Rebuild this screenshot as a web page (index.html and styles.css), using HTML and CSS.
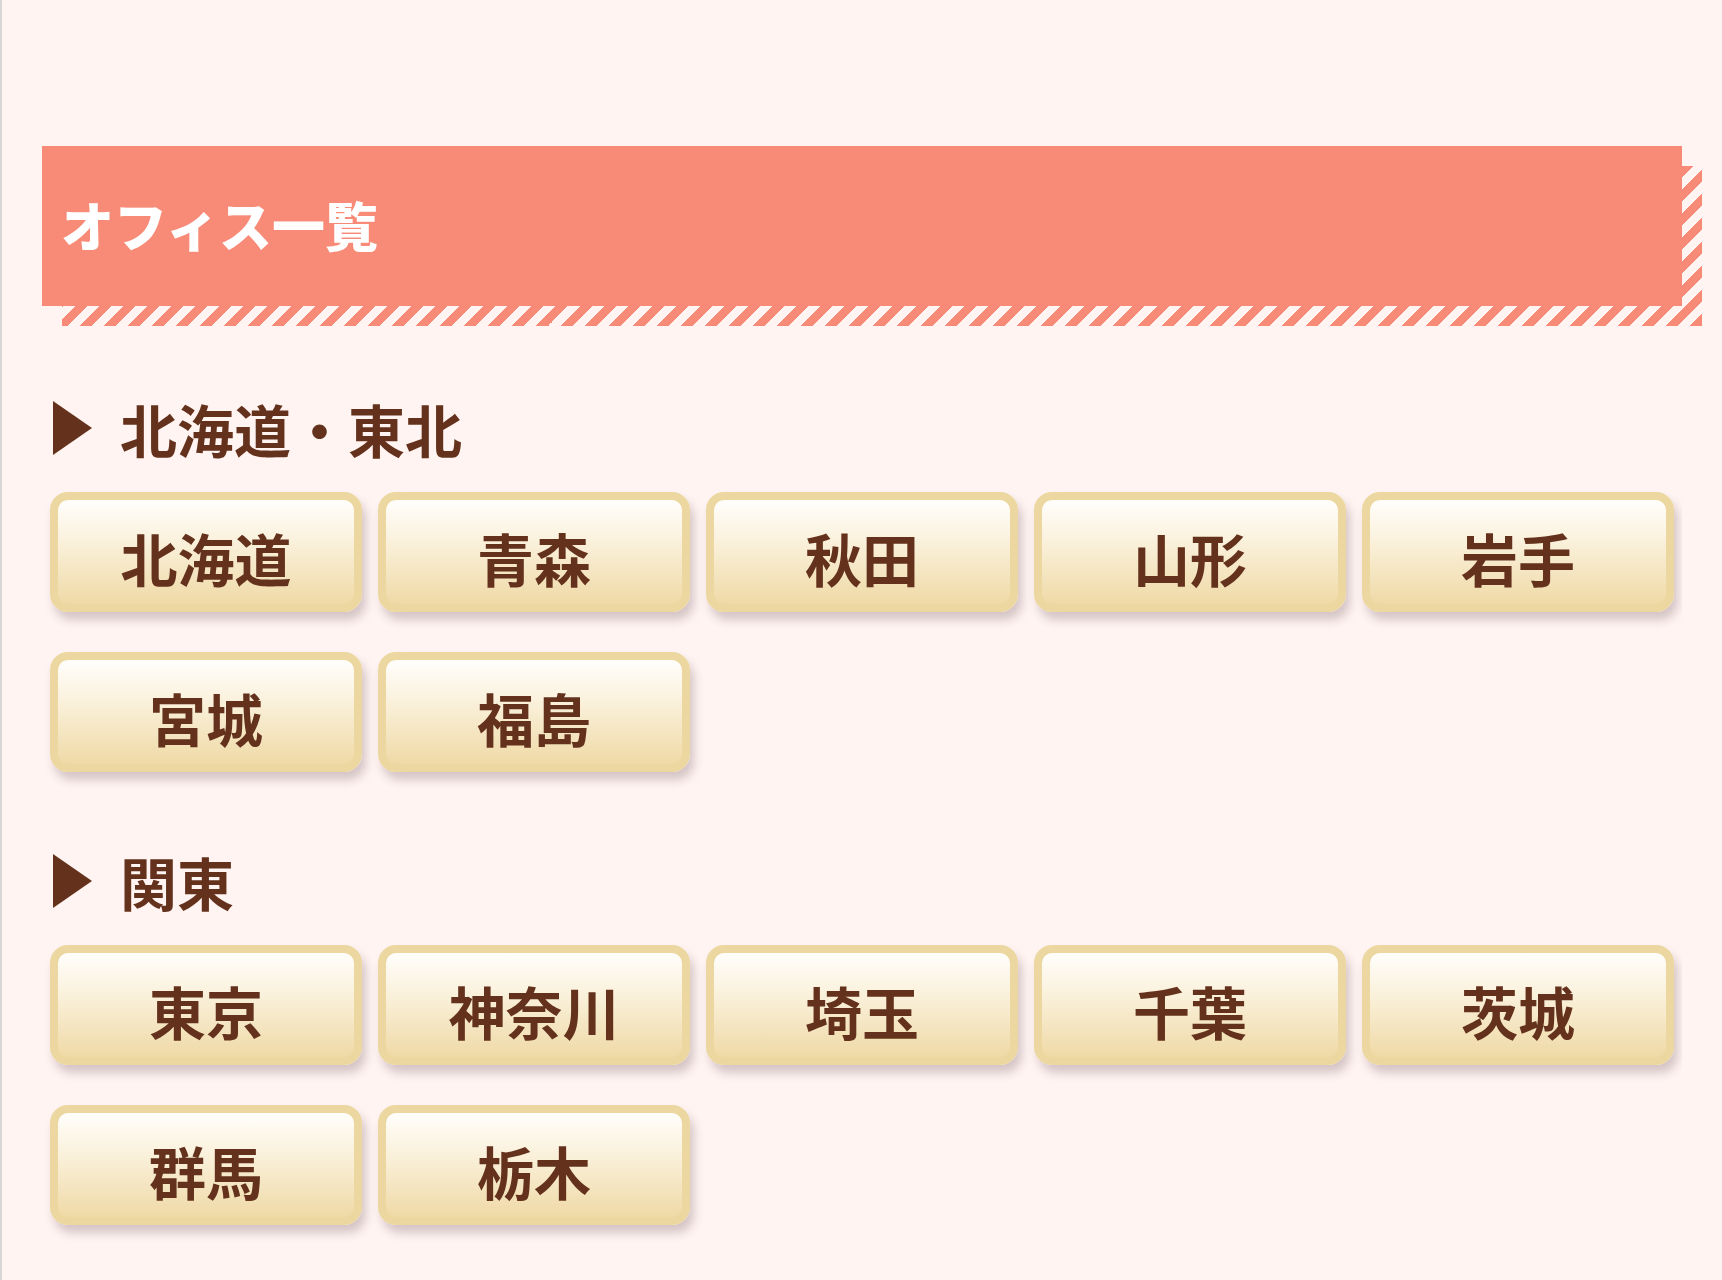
FILE: index.html
```html
<!DOCTYPE html>
<html lang="ja">

<head>
    <meta charset="UTF-8">
    <meta name="viewport" content="width=device-width, initial-scale=1.0">
    <title>オフィス一覧</title>
    <link rel="stylesheet" href="styles.css">
</head>

<body>
    <div class="container">
        <h1 class="page-title">オフィス一覧</h1>

        <section class="area">
            <h2 class="area-title">北海道・東北</h2>
            <ul class="office-list">
                <li><a href="#">北海道</a></li>
                <li><a href="#">青森</a></li>
                <li><a href="#">秋田</a></li>
                <li><a href="#">山形</a></li>
                <li><a href="#">岩手</a></li>
                <li><a href="#">宮城</a></li>
                <li><a href="#">福島</a></li>
            </ul>
        </section>

        <section class="area">
            <h2 class="area-title">関東</h2>
            <ul class="office-list">
                <li><a href="#">東京</a></li>
                <li><a href="#">神奈川</a></li>
                <li><a href="#">埼玉</a></li>
                <li><a href="#">千葉</a></li>
                <li><a href="#">茨城</a></li>
                <li><a href="#">群馬</a></li>
                <li><a href="#">栃木</a></li>
            </ul>
        </section>
    </div>
</body>

</html>
```

FILE: styles.css
```css
/* General Styles */
html,
body {
    margin: 0;
    padding: 0;
}

body {
    font-family: 'Noto Sans CJK JP', 'Noto Sans', sans-serif;
    background-color: #fff4f2;
    border-left: 2px solid #d6d6d6;
    min-height: 100vh;
    color: #64321c;
}

.container {
    padding: 146px 40px 0;
}

/* Page title with striped shadow */
.page-title {
    position: relative;
    box-sizing: border-box;
    height: 160px;
    margin: 0 0 94px;
    padding-left: 19px;
    background-color: #f78b77;
    color: #ffffff;
    font-size: 53px;
    font-weight: 900;
    line-height: 156px;
}

.page-title::after {
    content: "";
    position: absolute;
    top: 20px;
    left: 20px;
    width: 100%;
    height: 100%;
    z-index: -1;
    background: repeating-linear-gradient(-45deg,
            #f78b77 0,
            #f78b77 8.5px,
            transparent 8.5px,
            transparent 17px);
}

/* Area */
.area {
    margin-bottom: 61px;
}

.area:last-child {
    margin-bottom: 0;
}

.area-title {
    display: flex;
    align-items: center;
    margin: 0 0 16px;
    font-size: 57px;
    font-weight: 700;
    line-height: 56px;
}

.area-title::before {
    content: "";
    display: inline-block;
    width: 39px;
    height: 54px;
    margin: 0 28px 0 11px;
    background-color: #64321c;
    clip-path: polygon(0 0, 100% 50%, 0 100%);
}

/* Office buttons */
.office-list {
    list-style: none;
    margin: 0;
    padding: 0;
    display: grid;
    grid-template-columns: repeat(5, 1fr);
    overflow: hidden;
}

.office-list li {
    padding: 20px 8px;
}

.office-list a {
    display: flex;
    justify-content: center;
    align-items: center;
    box-sizing: border-box;
    height: 120px;
    padding-top: 10px;
    border: 8px solid #ecd7a0;
    border-radius: 18px;
    background: linear-gradient(#fffefb 0%, #fbf3e0 35%, #efd9a6 100%);
    box-shadow: 4px 8px 10px rgba(90, 60, 70, 0.25);
    color: #64321c;
    font-size: 57px;
    font-weight: 700;
    line-height: 56px;
    text-decoration: none;
}
```
